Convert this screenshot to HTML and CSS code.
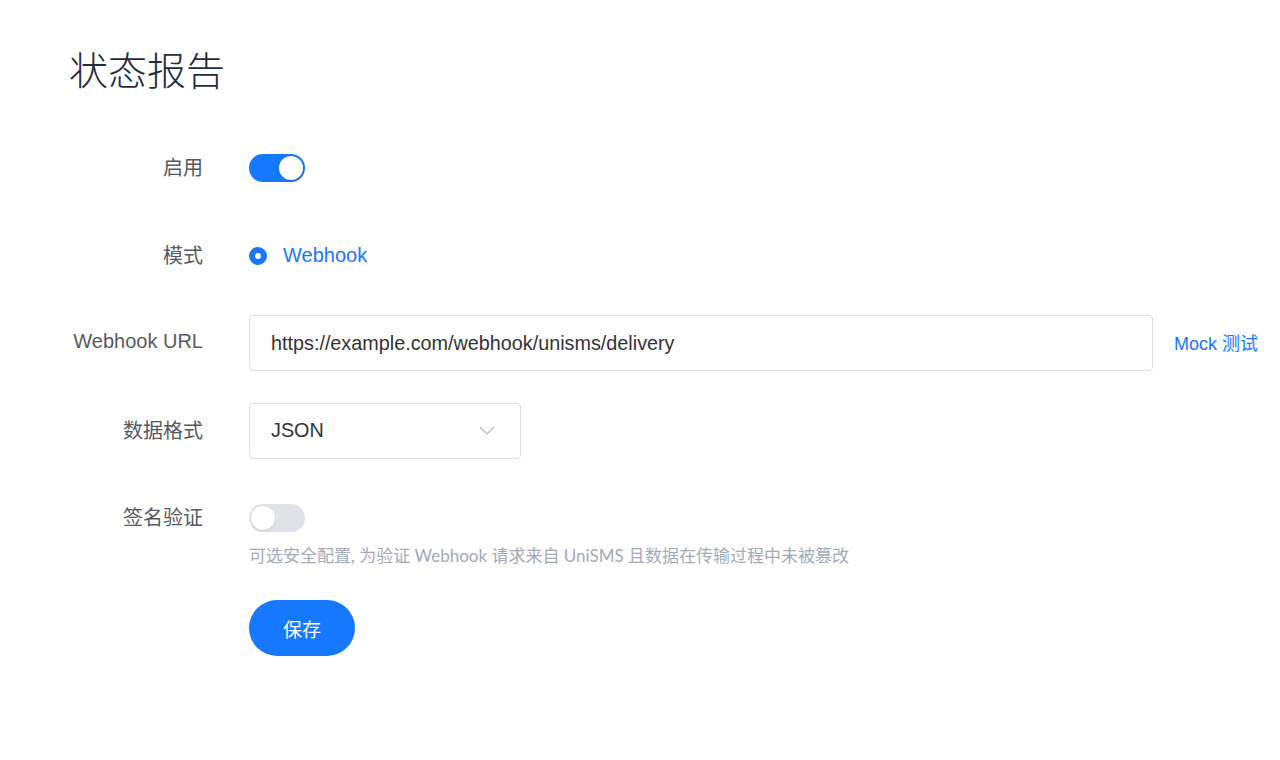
FILE: index.html
```html
<!DOCTYPE html>
<html lang="zh-CN">

<head>
    <meta charset="UTF-8" />
    <title>状态报告</title>
    <link rel="stylesheet" href="styles.css">
</head>

<body>

    <div class="page">
        <h1 class="title">状态报告</h1>

        <form class="form">
            <div class="row">
                <label class="label">启用</label>
                <div class="control">
                    <span class="switch on"><span class="knob"></span></span>
                </div>
            </div>

            <div class="row">
                <label class="label">模式</label>
                <div class="control">
                    <span class="radio"></span>
                    <span class="radio-text">Webhook</span>
                </div>
            </div>

            <div class="row">
                <label class="label">Webhook URL</label>
                <div class="control">
                    <div class="input">https://example.com/webhook/unisms/delivery</div>
                    <a class="link" href="#">Mock 测试</a>
                </div>
            </div>

            <div class="row">
                <label class="label">数据格式</label>
                <div class="control">
                    <div class="input select">
                        <span>JSON</span>
                        <svg class="arrow" width="16" height="9" viewBox="0 0 16 9">
                            <path d="M1 1 L8 8 L15 1" fill="none" stroke="#b4b9c2" stroke-width="1.2" />
                        </svg>
                    </div>
                </div>
            </div>

            <div class="row last">
                <label class="label">签名验证</label>
                <div class="control">
                    <span class="switch"><span class="knob"></span></span>
                </div>
            </div>

            <p class="hint">可选安全配置, 为验证 Webhook 请求来自 UniSMS 且数据在传输过程中未被篡改</p>

            <div class="actions">
                <button type="button" class="btn">保存</button>
            </div>
        </form>
    </div>

</body>

</html>
```

FILE: styles.css
```css
body {
    margin: 0;
    background: #fff;
    font-family: "Liberation Sans", "Noto Sans CJK SC", sans-serif;
}

.page {
    padding: 44px 22px 0 69px;
}

.title {
    margin: 0;
    font-size: 39px;
    line-height: 48px;
    font-weight: 300;
    color: #1f2d3d;
    font-family: "Noto Sans CJK SC", sans-serif;
}

/* 表单 */
.form {
    margin-top: 48px;
}

.row {
    display: flex;
    align-items: center;
    height: 56px;
    margin-bottom: 31.5px;
}

.row.last {
    margin-bottom: 0;
}

.label {
    width: 134px;
    flex: none;
    text-align: right;
    margin-right: 46px;
    padding-bottom: 3px;
    font-size: 20px;
    color: #555a62;
}

.control {
    flex: 1;
    display: flex;
    align-items: center;
}

/* 开关 */
.switch {
    position: relative;
    display: inline-block;
    width: 56px;
    height: 28px;
    border-radius: 14px;
    background: #dfe2e8;
}

.switch .knob {
    position: absolute;
    top: 2px;
    left: 2px;
    width: 24px;
    height: 24px;
    border-radius: 50%;
    background: #fff;
    box-shadow: 0 1px 2px rgba(0, 0, 0, 0.12);
}

.switch.on {
    background: #1677ff;
}

.switch.on .knob {
    left: 30px;
}

/* 单选 */
.radio {
    width: 18px;
    height: 18px;
    border-radius: 50%;
    background: #1677ff;
    box-sizing: border-box;
    border: 6px solid #1677ff;
    position: relative;
}

.radio::after {
    content: "";
    position: absolute;
    left: 0;
    top: 0;
    width: 6px;
    height: 6px;
    border-radius: 50%;
    background: #fff;
}

.radio-text {
    margin-left: 16px;
    font-size: 20px;
    color: #1677ff;
}

/* 输入框 */
.input {
    flex: 1;
    box-sizing: border-box;
    height: 56px;
    border: 1px solid #dcdfe6;
    border-radius: 4px;
    padding: 0 21px;
    display: flex;
    align-items: center;
    font-size: 19.8px;
    color: #333;
}

.input.select {
    flex: none;
    width: 272px;
    justify-content: space-between;
    padding-right: 25px;
}

.link {
    margin-left: 21px;
    padding-bottom: 3px;
    font-size: 18px;
    color: #1677ff;
    text-decoration: none;
}

.hint {
    margin: 0 0 0 180px;
    font-size: 17px;
    line-height: 20px;
    color: #a3aab7;
    font-family: "Lato", "Noto Sans CJK SC", sans-serif;
}

.actions {
    margin: 34px 0 0 180px;
}

.btn {
    height: 56px;
    padding: 0 34px;
    border: none;
    border-radius: 28px;
    background: #1677ff;
    color: #fff;
    font-size: 19px;
    font-family: "Noto Sans CJK SC", sans-serif;
}
```
